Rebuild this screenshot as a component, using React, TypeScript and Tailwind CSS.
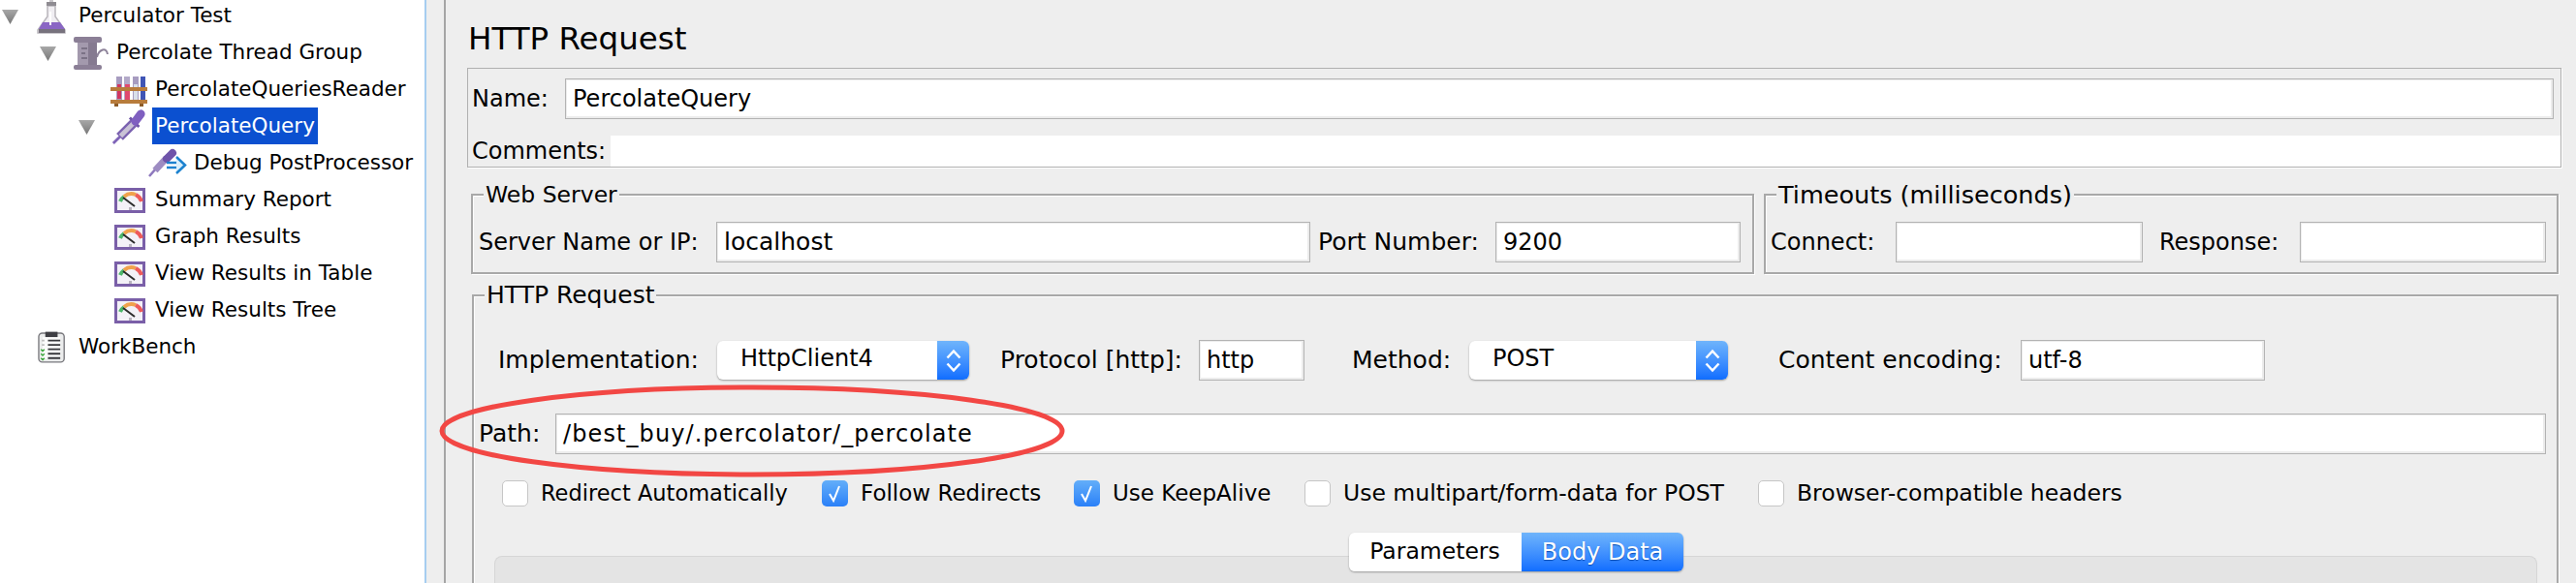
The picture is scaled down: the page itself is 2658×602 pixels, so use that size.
import type { ReactNode } from 'react';

const FlaskIcon = () => (
  <svg width="44" height="38" viewBox="0 0 44 38">
    <path d="M17 9h8v11l10 14v3H7v-3l10-14z" fill="#f0eef2" stroke="#b9b6bc" strokeWidth="1.5" />
    <path d="M12 26h18l5 7H8z" fill="#8a66c4" />
    <rect x="8" y="33" width="27" height="4" fill="#77727d" />
    <rect x="16" y="5" width="10" height="4" fill="#8f8c92" />
    <rect x="19" y="2" width="4" height="3" fill="#c9c7cb" />
    <rect x="19" y="15" width="2" height="14" fill="#fff" />
  </svg>
);

const ThreadGroupIcon = () => (
  <svg width="44" height="38" viewBox="0 0 44 38">
    <path d="M29 24c2-8 10-11 11-3" fill="none" stroke="#8d8299" strokeWidth="2" />
    <rect x="9" y="9" width="20" height="24" fill="#a399ad" />
    <rect x="20" y="9" width="9" height="24" fill="#857a90" />
    <path d="M13 15h6M13 20h4M13 25h6" stroke="#6f6579" strokeWidth="1.5" />
    <rect x="5" y="3" width="29" height="6" rx="2" fill="#8b7f96" />
    <rect x="5" y="32" width="29" height="5" rx="2" fill="#8b7f96" />
  </svg>
);

const RackIcon = () => (
  <svg width="44" height="38" viewBox="0 0 44 38">
    <rect x="9" y="6" width="6" height="28" fill="#a79cc0" />
    <rect x="17" y="6" width="6" height="28" fill="#b3a9c8" />
    <rect x="26" y="6" width="6" height="28" fill="#a79cc0" />
    <rect x="34" y="6" width="5" height="28" fill="#3f55b5" />
    <rect x="10" y="14" width="4" height="15" fill="#d2365f" />
    <rect x="18" y="14" width="5" height="17" fill="#e04a6e" />
    <rect x="27" y="14" width="4" height="17" fill="#d9e0ea" />
    <rect x="3" y="17" width="38" height="4" fill="#b87c3c" />
    <rect x="3" y="30" width="38" height="4" fill="#b87c3c" />
    <rect x="7" y="34" width="4" height="3" fill="#8d5c28" />
    <rect x="33" y="34" width="4" height="3" fill="#8d5c28" />
  </svg>
);

const DropperIcon = () => (
  <svg width="44" height="38" viewBox="0 0 44 40" className="overflow-visible">
    <path d="M5 39l8-8" stroke="#7f64b8" strokeWidth="3" />
    <path d="M12 32l15-15" stroke="#7b62b0" strokeWidth="10" />
    <path d="M13 31l14-14" stroke="#c9c2d6" strokeWidth="5" />
    <path d="M23 11l10 10" stroke="#6d52a8" strokeWidth="3" />
    <path d="M29 15l6-8" stroke="#7f5fc0" strokeWidth="9" strokeLinecap="round" />
  </svg>
);

const DebugIcon = () => (
  <svg width="44" height="38" viewBox="0 0 44 38" className="overflow-visible">
    <path d="M3 33l7-8" stroke="#8d77bd" strokeWidth="2.5" />
    <path d="M9 27l12-13" stroke="#9d8cc2" strokeWidth="7" />
    <path d="M21 15l6-6" stroke="#6f54aa" strokeWidth="8" strokeLinecap="round" />
    <path d="M21 19h11M21 24h11" stroke="#1c82cf" strokeWidth="2.5" />
    <path d="M31 13l9 8.500-9 8.500" fill="#d7eefc" stroke="#1c82cf" strokeWidth="2.500" />
  </svg>
);

const GaugeIcon = () => (
  <svg width="44" height="38" viewBox="0 0 44 38">
    <rect x="8.500" y="8.500" width="29" height="23" fill="#f3f1f7" stroke="#7a5fa8" strokeWidth="3" />
    <path d="M13 21a12 12 0 0 1 4-5" fill="none" stroke="#4cb76a" strokeWidth="4" />
    <path d="M17 16a12 12 0 0 1 12-2" fill="none" stroke="#f0a24c" strokeWidth="4" />
    <path d="M29 14a12 12 0 0 1 6 7" fill="none" stroke="#ee5a5a" strokeWidth="4" />
    <path d="M16 17l12 9" stroke="#2b2b2b" strokeWidth="2" />
    <rect x="22" y="27" width="3" height="3" fill="#b9b5c0" />
  </svg>
);

const ClipboardIcon = () => (
  <svg width="44" height="38" viewBox="0 0 44 42">
    <rect x="6.500" y="5.500" width="29" height="33" rx="4" fill="#eceded" stroke="#77777c" strokeWidth="1.500" />
    <rect x="11" y="10" width="20" height="25" fill="#fbfbfb" />
    <rect x="14" y="4" width="14" height="6" fill="#3f3f44" />
    <path d="M17 14h14M17 19h14M17 24h14M17 29h14M17 34h14" stroke="#38383c" strokeWidth="2" />
    <path d="M10 14h3M10 19h3" stroke="#bdbdbd" strokeWidth="2" />
    <path d="M9 24l2 2 2-2M9 29l2 2 2-2M9 34l2 2 2-2" fill="none" stroke="#3aa53a" strokeWidth="1.500" />
  </svg>
);

const Arrow = () => (
  <svg width="17" height="16" viewBox="0 0 17 16">
    <defs>
      <linearGradient id="arrowFill" x1="0" y1="0" x2="0" y2="1">
        <stop offset="0" stopColor="#a8a8a8" />
        <stop offset="1" stopColor="#777" />
      </linearGradient>
    </defs>
    <path d="M0 1h17L8.500 16z" fill="url(#arrowFill)" />
  </svg>
);

type Node = { label: string; indent: string; icon: ReactNode; open?: boolean; selected?: boolean };

const tree: Node[] = [
  { label: 'Perculator Test', indent: 'pl-[0px]', icon: <FlaskIcon />, open: true },
  { label: 'Percolate Thread Group', indent: 'pl-[39px]', icon: <ThreadGroupIcon />, open: true },
  { label: 'PercolateQueriesReader', indent: 'pl-[79px]', icon: <RackIcon /> },
  { label: 'PercolateQuery', indent: 'pl-[79px]', icon: <DropperIcon />, open: true, selected: true },
  { label: 'Debug PostProcessor', indent: 'pl-[119px]', icon: <DebugIcon /> },
  { label: 'Summary Report', indent: 'pl-[79px]', icon: <GaugeIcon /> },
  { label: 'Graph Results', indent: 'pl-[79px]', icon: <GaugeIcon /> },
  { label: 'View Results in Table', indent: 'pl-[79px]', icon: <GaugeIcon /> },
  { label: 'View Results Tree', indent: 'pl-[79px]', icon: <GaugeIcon /> },
  { label: 'WorkBench', indent: 'pl-[0px]', icon: <ClipboardIcon /> },
];

const TreeRow = ({ node }: { node: Node }) => (
  <div className={`flex h-[38px] items-center ${node.indent}`}>
    <span className="flex w-[32px] shrink-0 pl-[2px] pt-[2px]">{node.open && <Arrow />}</span>
    <span className="flex w-[44px] shrink-0 justify-center">{node.icon}</span>
    <span
      className={`ml-[2px] flex h-[38px] items-center whitespace-nowrap px-[3px] ${
        node.selected ? 'bg-[#0b50d0] text-white' : 'text-black'
      }`}
    >
      {node.label}
    </span>
  </div>
);

const Input = ({ value, className }: { value?: string; className: string }) => (
  <div
    className={`flex shrink-0 items-center whitespace-nowrap border border-[#b3b3b3] bg-white pl-[7px] shadow-[inset_1px_1px_0_#ececec,inset_-2px_-2px_0_#ececec] ${className}`}
  >
    {value}
  </div>
);

const Label = ({ text, className }: { text: string; className: string }) => (
  <span className={`shrink-0 whitespace-nowrap ${className}`}>{text}</span>
);

const Stepper = () => (
  <div className="flex h-full w-[33px] shrink-0 flex-col items-center justify-center gap-[3px] rounded-r-[6px] bg-gradient-to-b from-[#6fb4fb] to-[#0f6dff]">
    <svg width="16" height="11" viewBox="0 0 16 11">
      <path d="M1.500 9.500L8 2.500l6.500 7" fill="none" stroke="#fff" strokeWidth="2.500" />
    </svg>
    <svg width="16" height="11" viewBox="0 0 16 11">
      <path d="M1.500 1.500L8 8.500l6.500-7" fill="none" stroke="#fff" strokeWidth="2.500" />
    </svg>
  </div>
);

const Select = ({ value, className }: { value: string; className: string }) => (
  <div
    className={`flex h-[40px] shrink-0 items-center rounded-[6px] bg-white shadow-[0_1px_2px_#9a9a9a] ${className}`}
  >
    <span className="flex-1 pb-[4px] pl-[24px]">{value}</span>
    <Stepper />
  </div>
);

const Checkbox = ({ label, checked, className }: { label: string; checked?: boolean; className: string }) => (
  <div className={`flex shrink-0 items-center gap-[13px] ${className}`}>
    {checked ? (
      <span className="flex h-[27px] w-[27px] shrink-0 items-center justify-center rounded-[5px] bg-gradient-to-b from-[#63aef9] to-[#2a80f8]">
        <svg width="17" height="19" viewBox="0 0 17 19">
          <path d="M3 10l4 7 6-15" fill="none" stroke="#fff" strokeWidth="2" />
        </svg>
      </span>
    ) : (
      <span className="h-[27px] w-[27px] shrink-0 rounded-[5px] border border-[#c6c6c6] bg-white" />
    )}
    <span className="whitespace-nowrap">{label}</span>
  </div>
);

const Group = ({
  title,
  titleSize,
  className,
  children,
}: {
  title: string;
  titleSize: string;
  className: string;
  children: ReactNode;
}) => (
  <div
    className={`relative border-2 border-[#a8a8a8] shadow-[inset_1px_1px_0_#fff,1px_1px_0_#fff] ${className}`}
  >
    <span className={`absolute left-[11px] top-[-16px] whitespace-nowrap bg-[#eeeeee] px-[2px] leading-[30px] ${titleSize}`}>
      {title}
    </span>
    {children}
  </div>
);

export default function App() {
  return (
    <div className="flex h-[602px] w-[2658px] overflow-hidden bg-[#eeeeee] font-['DejaVu_Sans',sans-serif] text-black">
      <aside className="h-full w-[438px] shrink-0 overflow-hidden bg-white text-[21.5px]">
        <div className="mt-[-3px]">
          {tree.map((node) => (
            <TreeRow key={node.label} node={node} />
          ))}
        </div>
      </aside>
      <div className="w-[2px] shrink-0 bg-[#a6cdf0]" />
      <div className="w-[18px] shrink-0" />
      <div className="w-[2px] shrink-0 bg-[#a5a5a5]" />

      <main className="relative w-[2198px] shrink-0 text-[24px]">
        <h1 className="flex h-[70px] items-center pl-[23px] pt-[10px] text-[32.500px]">HTTP Request</h1>

        <section className="ml-[22px] h-[103px] w-[2161px] border border-[#b0b0b0] pt-[10px] shadow-[1px_1px_0_#fff]">
          <div className="flex items-center pl-[4px]">
            <Label text="Name:" className="w-[96px]" />
            <Input value="PercolateQuery" className="h-[42px] w-[2052px]" />
          </div>
          <div className="mt-[17px] flex h-[32px] items-center">
            <Label text="Comments:" className="w-[147px] pl-[4px]" />
            <div className="h-full flex-1 bg-white" />
          </div>
        </section>

        <div className="ml-[26px] mt-[27px] flex gap-[10px]">
          <Group title="Web Server" titleSize="text-[23.500px]" className="h-[83px] w-[1324px] pt-[27px]">
            <div className="flex items-center pl-[6px]">
              <Label text="Server Name or IP:" className="w-[245px]" />
              <Input value="localhost" className="h-[42px] w-[613px] text-[25px]" />
              <Label text="Port Number:" className="ml-[8px] w-[183px] text-[25px]" />
              <Input value="9200" className="h-[42px] w-[253px]" />
            </div>
          </Group>
          <Group title="Timeouts (milliseconds)" titleSize="text-[25.500px]" className="h-[83px] w-[820px] pt-[27px]">
            <div className="flex items-center pl-[5px]">
              <Label text="Connect:" className="w-[129px]" />
              <Input className="h-[42px] w-[255px]" />
              <Label text="Response:" className="ml-[17px] w-[145px]" />
              <Input className="h-[42px] w-[254px]" />
            </div>
          </Group>
        </div>

        <Group title="HTTP Request" titleSize="text-[25px]" className="ml-[27px] mt-[21px] w-[2153px] pb-[40px] pt-[45px]">
          <div className="flex items-center pl-[25px]">
            <Label text="Implementation:" className="w-[226px] text-[25px]" />
            <Select value="HttpClient4" className="w-[260px]" />
            <Label text="Protocol [http]:" className="ml-[32px] w-[205px] text-[25px]" />
            <Input value="http" className="h-[42px] w-[109px]" />
            <Label text="Method:" className="ml-[49px] w-[121px] text-[25px]" />
            <Select value="POST" className="w-[267px]" />
            <Label text="Content encoding:" className="ml-[52px] w-[250px] text-[25px]" />
            <Input value="utf-8" className="h-[42px] w-[252px]" />
          </div>

          <div className="mt-[34px] flex items-center pl-[5px]">
            <Label text="Path:" className="w-[79px] text-[25px]" />
            <Input value="/best_buy/.percolator/_percolate" className="h-[42px] w-[2054px] tracking-[1.100px]" />
          </div>

          <div className="mt-[27px] flex h-[27px] pl-[29px]">
            <Checkbox label="Redirect Automatically" className="w-[330px] text-[22.500px]" />
            <Checkbox label="Follow Redirects" checked className="w-[260px] text-[23px]" />
            <Checkbox label="Use KeepAlive" checked className="w-[238px] text-[23px]" />
            <Checkbox label="Use multipart/form-data for POST" className="w-[468px] text-[23.500px]" />
            <Checkbox label="Browser-compatible headers" className="w-[400px] text-[23.500px]" />
          </div>

          <div className="relative ml-[21px] mt-[51px] h-[60px] w-[2108px] rounded-t-[8px] border border-b-0 border-[#d6d6d6] bg-[#e4e4e4]">
            <div className="absolute left-[881px] top-[-25px] flex h-[40px] w-[345px] rounded-[6px] shadow-[0_1px_2px_#9a9a9a]">
              <div className="flex w-[177px] items-center justify-center rounded-l-[6px] bg-white text-[23.500px]">Parameters</div>
              <div className="flex flex-1 items-center justify-center rounded-r-[6px] border-l border-white bg-gradient-to-b from-[#6fb4fb] to-[#0f6dff] text-white [text-shadow:0_1px_1px_#0a4bb0]">
                Body Data
              </div>
            </div>
          </div>
        </Group>

        <svg className="absolute left-[-6px] top-[395px] overflow-visible" width="650" height="100" viewBox="0 0 650 100">
          <ellipse cx="322" cy="50" rx="320" ry="45" fill="none" stroke="#f24744" strokeWidth="5" />
        </svg>
      </main>
    </div>
  );
}
